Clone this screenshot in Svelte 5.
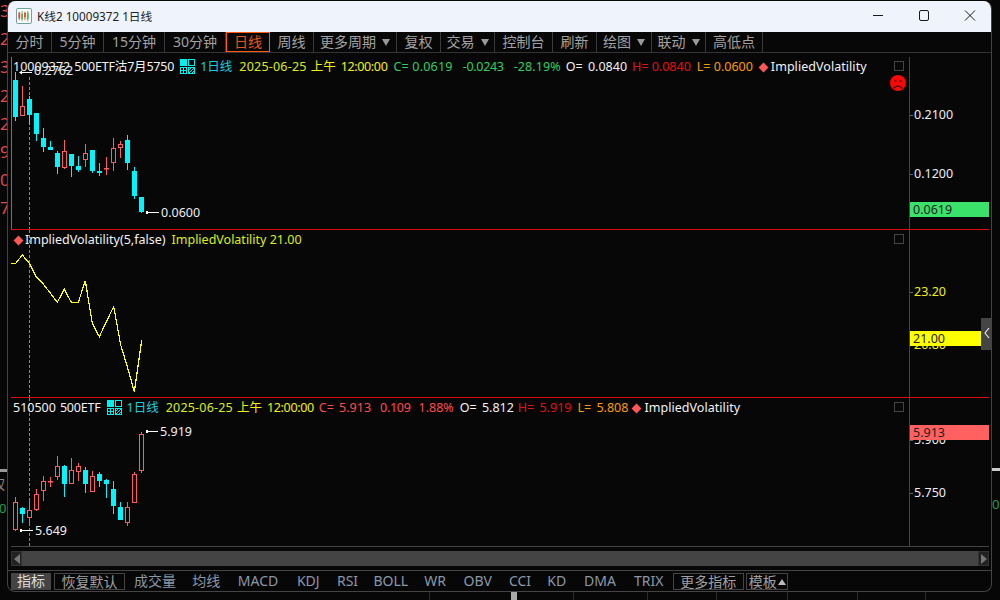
<script>
  const tools = [
    { t: '分时', w: 44 }, { t: '5分钟', w: 52 }, { t: '15分钟', w: 61 }, { t: '30分钟', w: 61 },
    { t: '日线', w: 44, on: true }, { t: '周线', w: 44 }, { t: '更多周期', w: 83, dd: true }, { t: '复权', w: 44 },
    { t: '交易', w: 54, dd: true }, { t: '控制台', w: 58 }, { t: '刷新', w: 44 }, { t: '绘图', w: 55, dd: true },
    { t: '联动', w: 54, dd: true }, { t: '高低点', w: 57 }
  ];
  const tabs = [
    { t: '成交量', w: 42 }, { t: '均线', w: 28 }, { t: 'MACD', w: 43 }, { t: 'KDJ', w: 25 }, { t: 'RSI', w: 21 }, { t: 'BOLL', w: 33 },
    { t: 'WR', w: 23 }, { t: 'OBV', w: 30 }, { t: 'CCI', w: 22 }, { t: 'KD', w: 19 }, { t: 'DMA', w: 35 }, { t: 'TRIX', w: 30 }
  ];
  const leftDigits = ['3', '2', '3', '2', '2', '9', '0', '7'];
  const ticks = [429, 573, 647, 716, 787, 857, 925];

  // [bodyTop, bodyBottom, wickTop, wickBottom, isRed]
  const c1 = [
    [80,117,72,121,0],[106,116,86,116,1],[99,115,96,125,0],[113,134,113,141,0],[138,147,128,152,0],
    [147,150,141,150,0],[153,167,151,174,0],[151,168,140,169,1],[154,166,154,177,0],[166,170,156,172,0],
    [153,160,144,167,1],[150,171,150,173,0],[171,173,163,176,0],[168,169,157,175,1],[148,163,138,171,1],
    [144,148,141,158,1],[140,163,135,170,0],[171,196,167,199,0],[197,212,197,213,0]
  ];
  const c3 = [
    [502,530,497,531,1],[508,514,507,523,0],[510,518,500,526,1],[494,510,489,511,1],[481,491,476,501,1],
    [481,482,477,487,1],[466,477,456,480,1],[466,484,465,497,0],[470,484,458,484,1],[466,472,463,481,1],
    [470,484,467,493,0],[476,492,471,492,1],[474,481,472,487,0],[480,484,479,498,0],[489,506,481,514,0],
    [507,520,502,520,0],[507,523,502,526,1],[474,503,472,503,1],[434,471,432,473,1]
  ];
  const xOf = (i) => 13 + i * 7;
  const ivPts = [[33,40],[47,40],[67,15],[88,40],[107,78],[128,100],[150,128],[172,157],[193,118],[214,157],[235,157],[256,92],[277,220],[298,260],[319,215],[341,170],[362,285],[382,350],[403,425],[425,270]];
  const ivLine = ivPts.map(([x, y]) => `${(x / 3).toFixed(1)},${(250 + y / 3).toFixed(1)}`).join(' ');
</script>

{#snippet candles(list)}
  {#each list as [bt, bb, wt, wb, red], i}
    {@const x = xOf(i)}
    <rect x={x + 2} y={wt} width="1" height={wb - wt} fill={red ? '#ff5c5c' : '#00f6ff'} />
    {#if red}
      <rect x={x + 0.5} y={bt + 0.5} width="4" height={Math.max(bb - bt - 1, 0.5)} fill="#070707" stroke="#ff5c5c" />
    {:else}
      <rect x={x} y={bt} width="5" height={bb - bt} fill="#00f6ff" />
    {/if}
  {/each}
{/snippet}

{#snippet layoutIcon()}
  <svg class="lay" viewBox="0 0 15 15" width="15" height="15">
    <rect x="0" y="0" width="7" height="7" fill="#00f0f0" />
    <rect x="8.5" y="0.5" width="6" height="6" fill="none" stroke="#00f0f0" />
    <rect x="0.5" y="8.5" width="6" height="6" fill="none" stroke="#00f0f0" />
    <path d="M3.5 8v7M0 11.5h7" stroke="#00f0f0" />
    <rect x="8.5" y="8.5" width="6" height="6" fill="none" stroke="#00f0f0" />
    <path d="M9 14l5-5M9 11l2-2M12 14l2-2" stroke="#00f0f0" />
  </svg>
{/snippet}

<div class="root">
  <div class="under">
    {#each ticks as x}<i class="utick" style="left:{x}px"></i>{/each}
    <i class="ublock"></i>
  </div>

  <div class="strip">
    <div class="digits">
      {#each leftDigits as d}<span>{d}</span>{/each}
    </div>
    <div class="strip-bar"></div>
    <div class="strip-q">权</div>
    <div class="strip-g">06</div>
  </div>

  <div class="win">
    <header class="title">
      <svg class="appicon" viewBox="0 0 17 17" width="16" height="16">
        <rect x="0.5" y="0.5" width="16" height="16" rx="1.5" fill="#fdfdfd" stroke="#5f9f8f" />
        <path d="M3.5 4v9" stroke="#e25050" stroke-width="1" /><rect x="2.5" y="5" width="2" height="6" fill="#e25050" />
        <path d="M6.5 3v11" stroke="#58b858" stroke-width="1" /><rect x="5.5" y="6" width="2" height="6" fill="#58b858" />
        <path d="M9.5 4v9" stroke="#e25050" stroke-width="1" /><rect x="8.5" y="5" width="2" height="5" fill="#e25050" />
        <path d="M12.5 3v11" stroke="#58b858" stroke-width="1" /><rect x="11.5" y="5" width="2" height="7" fill="#58b858" />
      </svg>
      <span class="title-text">K线2 10009372 1日线</span>
      <div class="controls">
        <svg viewBox="0 0 46 31" width="46" height="31"><path d="M18 14.500h10" stroke="#1a1a1a" /></svg>
        <svg viewBox="0 0 46 31" width="46" height="31"><rect x="18.5" y="9.500" width="9" height="10" rx="1.500" fill="none" stroke="#1a1a1a" /></svg>
        <svg viewBox="0 0 46 31" width="46" height="31"><path d="M18 9.500l10 10M28 9.500l-10 10" stroke="#1a1a1a" /></svg>
      </div>
    </header>

    <nav class="tools">
      {#each tools as tool}
        <div class="tool" class:on={tool.on} class:dd={tool.dd} style="width:{tool.w}px">
          <span>{tool.t}</span>
          {#if tool.dd}<i class="tri"></i>{/if}
        </div>
      {/each}
    </nav>

    <main class="main">
      <section class="pane p1">
        <svg class="chart" viewBox="11 57 898 172" width="898" height="172">
          <rect x="11" y="57" width="1" height="172" fill="#e2481c" />
          <line x1="29.500" y1="77" x2="29.500" y2="229" class="cross" />
          {@render candles(c1)}
          <path d="M20 72.500h12" stroke="#fff" /><path d="M19 72.500l3-2v4z" fill="#fff" />
          <path d="M146 212.500h13" stroke="#fff" /><rect x="146" y="211" width="2" height="3" fill="#fff" />
          <circle cx="898" cy="83" r="8" fill="#f80808" />
          <circle cx="895.500" cy="81" r="1" fill="#5a0000" /><circle cx="900.500" cy="81" r="1" fill="#5a0000" />
          <path d="M893.500 88.500q4.500-5 9 0" fill="none" stroke="#5a0000" stroke-width="1.300" />
        </svg>
        <div class="hd">
          <span class="w">10009372</span>
          <span class="w a1">500ETF沽7月5750</span>
          {@render layoutIcon()}
          <span class="cy a2">1日线</span>
          <span class="y a3">2025-06-25</span>
          <span class="y2 a4">上午</span>
          <span class="y2 a5">12:00:00</span>
          <span class="g a6">C= 0.0619</span>
          <span class="g a7">-0.0243</span>
          <span class="g a8">-28.19%</span>
          <span class="w a9 wide">O= 0.0840</span>
          <span class="r a10">H= 0.0840</span>
          <span class="o a11">L= 0.0600</span>
          <i class="dia a12"></i>
          <span class="w a13">ImpliedVolatility</span>
        </div>
        <span class="chk"></span>
        <span class="lab l-high">0.2762</span>
        <span class="lab l-low">0.0600</span>
        <aside class="axis">
          <span class="tk t-a">0.2100</span>
          <span class="tk t-b">0.1200</span>
          <span class="tag green">0.0619</span>
        </aside>
      </section>

      <section class="pane p2">
        <svg class="chart" viewBox="11 230 898 167" width="898" height="167">
          <line x1="29.500" y1="230" x2="29.500" y2="397" class="cross" />
          <polyline points={ivLine} fill="none" stroke="#ffff10" stroke-width="1.200" shape-rendering="crispEdges" />
        </svg>
        <div class="hd">
          <i class="dia first"></i>
          <span class="w s7">ImpliedVolatility(5,false)</span>
          <span class="y s8">ImpliedVolatility 21.00</span>
        </div>
        <span class="chk"></span>
        <aside class="axis">
          <span class="tk yl t-c">23.20</span>
          <span class="tk yl t-d">20.80</span>
          <span class="tag yellow">21.00</span>
        </aside>
        <div class="handle">
          <svg viewBox="0 0 11 32" width="11" height="32"><path d="M8 10l-4 5 4 5" fill="none" stroke="#eee" stroke-width="1.100" /></svg>
        </div>
      </section>

      <section class="pane p3">
        <svg class="chart" viewBox="11 398 898 148" width="898" height="148">
          <line x1="29.500" y1="398" x2="29.500" y2="546" class="cross" />
          {@render candles(c3)}
          <path d="M146 431.500h12" stroke="#fff" /><rect x="146" y="430" width="2" height="3" fill="#fff" />
          <path d="M20 530.500h13" stroke="#fff" /><rect x="20" y="529" width="2" height="3" fill="#fff" />
        </svg>
        <div class="hd">
          <span class="w">510500</span>
          <span class="w b1">500ETF</span>
          {@render layoutIcon()}
          <span class="cy a2">1日线</span>
          <span class="y a3">2025-06-25</span>
          <span class="y2 a4">上午</span>
          <span class="y2 a5">12:00:00</span>
          <span class="r2 b2 wide">C= 5.913</span>
          <span class="r2 b3">0.109</span>
          <span class="r2 b3a">1.88%</span>
          <span class="w b4 wide">O= 5.812</span>
          <span class="r b5 wide">H= 5.919</span>
          <span class="o b4 wide">L= 5.808</span>
          <i class="dia b6"></i>
          <span class="w a13">ImpliedVolatility</span>
        </div>
        <span class="chk"></span>
        <span class="lab l-hi3">5.919</span>
        <span class="lab l-lo3">5.649</span>
        <aside class="axis">
          <span class="tk t-e">5.900</span>
          <span class="tag red">5.913</span>
          <span class="tk t-f">5.750</span>
        </aside>
      </section>

      <div class="scroll">
        <span class="arrow"><i class="al"></i></span>
        <span class="arrow"><i class="ar"></i></span>
      </div>
    </main>

    <footer class="tabs">
      <span class="tab active">指标</span>
      <span class="tab boxed reset">恢复默认</span>
      <div class="plains">
        {#each tabs as tb}<span class="tab plain" style="width:{tb.w}px">{tb.t}</span>{/each}
      </div>
      <span class="tab boxed more">更多指标</span>
      <span class="tab boxed tpl">模板<i class="up"></i></span>
    </footer>
  </div>

  <div class="strip-r">
    <div class="strip-rbar"></div>
    <div class="strip-rg">02</div>
  </div>
</div>

<style>
  :global(body) { margin: 0; background: #000; }
  .root {
    position: relative;
    width: 1000px; height: 600px; display: flex; overflow: hidden; background: #070707;
    font-family: "Noto Sans", "Noto Sans CJK SC", sans-serif; font-size: 13px;
  }
  .under { position: absolute; left: 0; right: 0; top: 592px; height: 8px; }
  .utick { position: absolute; top: 0; width: 1px; height: 8px; background: #2a2a2a; }
  .ublock { position: absolute; left: 511px; top: 0; width: 6px; height: 8px; background: #aaa; }
  .strip { width: 7px; flex: none; overflow: hidden; color: #e04a4a; }
  .digits { display: flex; flex-direction: column; margin-top: -3px; font-size: 17px; }
  .digits span { height: 28.200px; line-height: 28px; }
  .strip-bar { height: 3px; background: #999; margin-top: 246px; }
  .strip-q { color: #888; font-size: 13px; margin-top: 2px; margin-left: -8px; white-space: nowrap; }
  .strip-g { color: #1fa04a; font-size: 13px; margin-top: 6px; margin-left: -1px; }
  .strip-r { flex: 1; overflow: hidden; }
  .strip-rbar { height: 3px; background: #ccc; margin-top: 468px; }
  .strip-rg { color: #1fa04a; font-size: 13px; margin-top: 24px; }

  .win {
    position: relative;
    width: 985px; height: 591px; margin-top: 1px; flex: none; box-sizing: border-box;
    display: flex; flex-direction: column; overflow: hidden;
    border: 1px solid #444; border-top: 0; border-radius: 8px;
    background: #070707;
  }
  .title { height: 31px; flex: none; background: #eff3fb; display: flex; align-items: center; padding-bottom: 2px; box-sizing: border-box; }
  .appicon { margin-left: 8px; }
  .title-text { margin-left: 5px; font-size: 11.700px; color: #222; }
  .controls { margin-left: auto; display: flex; margin-right: -2px; align-self: flex-start; height: 31px; }

  .tools { height: 20px; flex: none; display: flex; border-bottom: 1px solid #333; box-sizing: content-box; }
  .tool {
    box-sizing: border-box; height: 20px; flex: none; border-right: 1px solid #3a3a3a; padding-bottom: 2px;
    display: flex; align-items: center; justify-content: center; gap: 6px;
    color: #a2a2a2; font-size: 14px;
  }
  .tool.on { border: 1px solid #ff5a10; color: #e8551a; }
  .tri { width: 0; height: 0; border: 4.500px solid transparent; border-top: 7px solid #999; border-bottom: 0; margin-top: 2px; }

  .main { flex: none; padding: 4px 0 0 3px; }
  .pane { position: relative; width: 978px; display: flex; box-sizing: border-box; border-bottom: 1px solid #d80f0f; }
  .p1 { height: 173px; }
  .p2 { height: 168px; }
  .p3 { height: 149px; border-bottom-color: #444; }
  .chart { display: block; flex: none; }
  .cross { stroke: #888; stroke-dasharray: 3 2; }
  .axis { position: relative; flex: 1; border-left: 1px solid #444; color: #ddd; }

  .hd {
    position: absolute; left: 2px; top: 2px; height: 16px; display: flex; align-items: center;
    line-height: 16px; white-space: nowrap; font-size: 12.500px;
  }
  .hd .lay { margin-left: 6px; margin-top: -1px; }
  .w { color: #f2f2f2; }
  .cy { color: #16d0e0; }
  .y { color: #dcee10; }
  .y2 { color: #f2f20a; }
  .g { color: #2fd05e; }
  .r { color: #e21010; }
  .r2 { color: #ff4a4a; }
  .o { color: #ff9c00; }
  .a1 { margin-left: 4px; letter-spacing: -0.200px; }
  .a2 { margin-left: 5px; }
  .a3 { margin-left: 7px; letter-spacing: 0.200px; }
  .a4 { margin-left: 4px; }
  .a5 { margin-left: 5px; letter-spacing: -0.350px; }
  .a6 { margin-left: 6px; letter-spacing: 0.200px; }
  .a7 { margin-left: 10px; letter-spacing: -0.300px; }
  .a8 { margin-left: 10px; letter-spacing: 0.100px; }
  .a9 { margin-left: 5px; }
  .a10 { margin-left: 5px; }
  .a11 { margin-left: 6px; }
  .a12 { margin-left: 7px; }
  .a13 { margin-left: 4px; letter-spacing: 0.050px; }
  .b1 { margin-left: 4px; letter-spacing: -0.200px; }
  .b2 { margin-left: 5px; }
  .b3 { margin-left: 9px; letter-spacing: -0.300px; }
  .b3a { margin-left: 8px; }
  .b4 { margin-left: 6px; }
  .b5 { margin-left: 4px; }
  .b6 { margin-left: 5px; }
  .wide { word-spacing: 2px; }
  .s7 { margin-left: 3px; }
  .s8 { margin-left: 6px; }
  .dia { width: 7px; height: 7px; background: #ff5656; transform: rotate(45deg); flex: none; display: block; }
  .dia.first { margin-left: 2px; }
  .chk { position: absolute; left: 883px; top: 4px; width: 8px; height: 8px; border: 1px solid #444; }

  .lab { position: absolute; color: #eee; font-size: 12.500px; line-height: 16px; }
  .l-high { left: 23px; top: 6px; }
  .l-low { left: 150px; top: 148px; }
  .l-hi3 { left: 149px; top: 26px; }
  .l-lo3 { left: 24px; top: 125px; }

  .tk { position: absolute; left: 4px; font-size: 12.500px; line-height: 16px; color: #eee; }
  .tk::before { content: ""; position: absolute; left: -4px; top: 8px; width: 3px; height: 1px; background: #666; }
  .tk.yl { color: #f2f20a; }
  .t-a { top: 50px; }
  .t-b { top: 109px; }
  .t-c { top: 54px; }
  .t-d { top: 107px; }
  .t-e { top: 34px; }
  .t-f { top: 87px; }
  .tag { position: absolute; left: 0; top: 145px; height: 15px; line-height: 16px; width: 79px; padding-left: 3px; box-sizing: border-box; color: #222; font-size: 12.500px; }
  .green { background: #3be26a; }
  .yellow { background: #ffff00; width: 71px; top: 101px; }
  .red { background: #ff6060; top: 27px; }
  .handle { position: absolute; left: 970px; top: 88px; width: 11px; height: 32px; background: #444; }
  .handle svg { display: block; }

  .scroll {
    width: 978px; height: 15px; margin-top: 4px; background: #444; display: flex; justify-content: space-between;
  }
  .arrow { width: 11px; height: 15px; background: #222; display: flex; align-items: center; justify-content: center; box-sizing: border-box; border: 1px solid #333; }
  .al { border: 5px solid transparent; border-right: 6px solid #777; border-left: 0; }
  .ar { border: 5px solid transparent; border-left: 6px solid #777; border-right: 0; }

  .tabs {
    margin-top: 4px; height: 21px; flex: none; border-top: 1px solid #444; display: flex; align-items: flex-start;
    padding: 2px 0 0 3px; box-sizing: border-box; white-space: nowrap; font-size: 14px; color: #8e9aa8;
  }
  .tab { height: 17px; line-height: 16px; box-sizing: border-box; flex: none; display: block; }
  .active { width: 40px; background: #444; color: #ddd; text-align: center; }
  .boxed { border: 1px solid #444; color: #a0a0a0; text-align: center; }
  .reset { width: 71px; margin-left: 3px; }
  .plains { display: flex; gap: 16.250px; margin-left: 9px; flex: none; }
  .plain { color: #8a98a8; text-align: center; display: flex; justify-content: center; }
  .more { width: 71px; margin-left: 9px; }
  .tpl { width: 42px; margin-left: 2px; text-align: left; padding-left: 2px; }
  .up { display: inline-block; border: 4px solid transparent; border-bottom: 6px solid #bbb; border-top: 0; margin-left: 1px; vertical-align: 2px; }
</style>
